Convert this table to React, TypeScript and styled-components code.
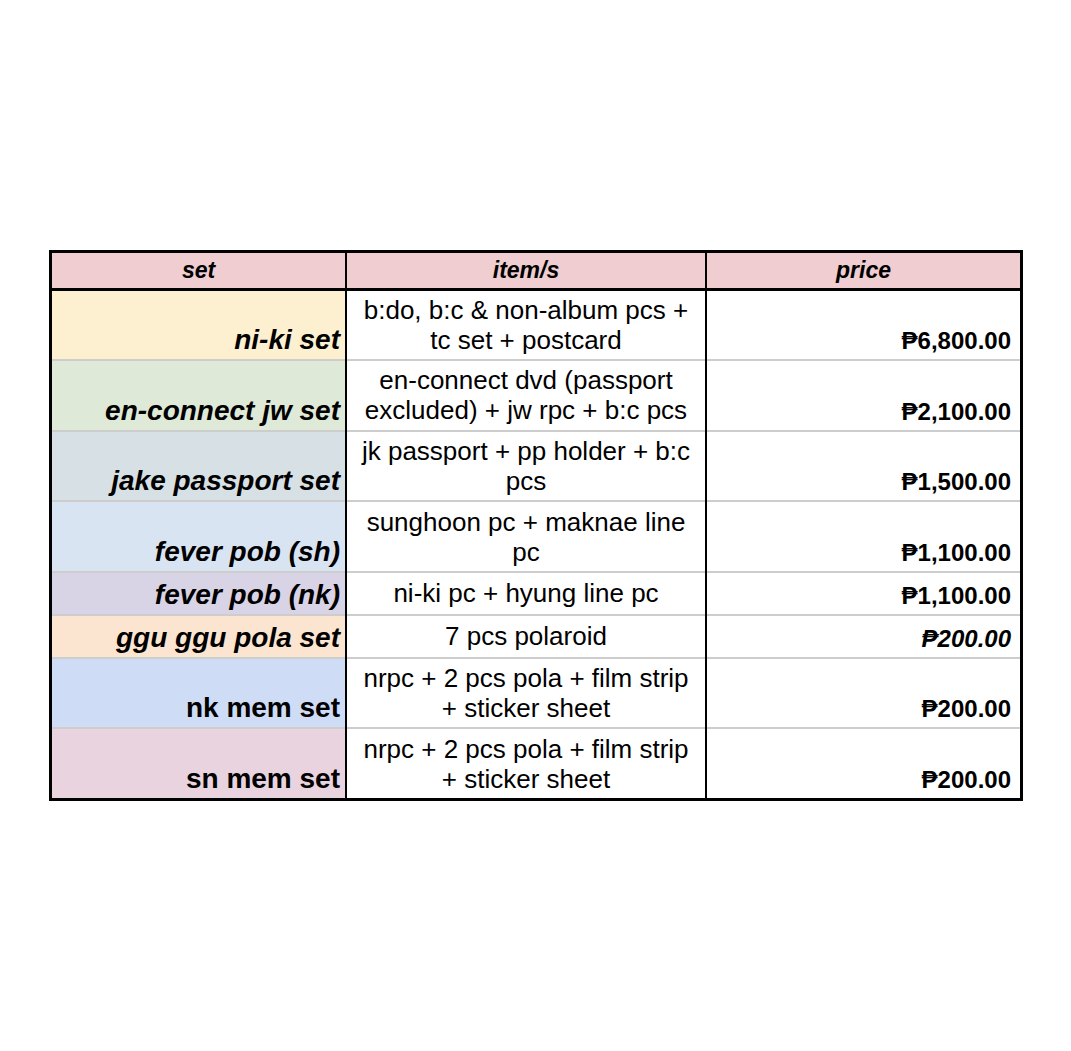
import styled, { createGlobalStyle } from "styled-components";

type Row = {
  set: string;
  items: string[];
  price: string;
  color: string;
  tall: boolean;
  upright?: boolean;
  italicPrice?: boolean;
};

const rows: Row[] = [
  { set: "ni-ki set", items: ["b:do, b:c & non-album pcs +", "tc set + postcard"], price: "₱6,800.00", color: "#fcf0d0", tall: true },
  { set: "en-connect jw set", items: ["en-connect dvd (passport", "excluded) + jw rpc + b:c pcs"], price: "₱2,100.00", color: "#dfe9d7", tall: true },
  { set: "jake passport set", items: ["jk passport + pp holder + b:c", "pcs"], price: "₱1,500.00", color: "#d7e0e4", tall: true },
  { set: "fever pob (sh)", items: ["sunghoon pc + maknae line", "pc"], price: "₱1,100.00", color: "#d9e4f3", tall: true },
  { set: "fever pob (nk)", items: ["ni-ki pc + hyung line pc"], price: "₱1,100.00", color: "#d9d3e6", tall: false },
  { set: "ggu ggu pola set", items: ["7 pcs polaroid"], price: "₱200.00", color: "#fbe5d0", tall: false, italicPrice: true },
  { set: "nk mem set", items: ["nrpc + 2 pcs pola + film strip", "+ sticker sheet"], price: "₱200.00", color: "#cfdcf5", tall: true, upright: true },
  { set: "sn mem set", items: ["nrpc + 2 pcs pola + film strip", "+ sticker sheet"], price: "₱200.00", color: "#e8d3de", tall: true, upright: true },
];

const GlobalStyle = createGlobalStyle`
  html, body {
    margin: 0;
    background: #ffffff;
  }
  body {
    font-family: "Liberation Sans", Arial, "DejaVu Sans", sans-serif;
    color: #000;
  }
`;

const Page = styled.div`
  width: 1071px;
  height: 1051px;
  padding: 250px 0 0 49px;
  box-sizing: border-box;
`;

const Sheet = styled.table`
  width: 964px;
  border-collapse: collapse;
  table-layout: fixed;
  border: 3px solid #000;
`;

const HeadCell = styled.th<{ $w: number }>`
  width: ${(p) => p.$w}px;
  height: 35px;
  padding: 0;
  background: #efcdd0;
  border-bottom: 3px solid #000;
  border-left: 2px solid #000;
  font-size: 23px;
  font-weight: bold;
  font-style: italic;
  text-align: center;
  vertical-align: middle;

  &:first-child {
    border-left: none;
  }
`;

const BodyRow = styled.tr<{ $tall: boolean }>`
  height: ${(p) => (p.$tall ? 70.6 : 43)}px;
  border-bottom: 2px solid #cdcdcd;

  &:last-child {
    border-bottom: none;
  }
`;

const SetCell = styled.td<{ $bg: string; $upright?: boolean }>`
  background: ${(p) => p.$bg};
  padding: 0 5px 4px 0;
  text-align: right;
  vertical-align: bottom;
  font-size: 28px;
  line-height: 30px;
  font-weight: bold;
  font-style: ${(p) => (p.$upright ? "normal" : "italic")};
  white-space: nowrap;
`;

const ItemCell = styled.td`
  border-left: 2px solid #000;
  padding: 0 4px;
  text-align: center;
  vertical-align: middle;
  font-size: 26px;
  line-height: 30px;
`;

const PriceCell = styled.td<{ $italic?: boolean }>`
  border-left: 2px solid #000;
  padding: 0 9px 3px 0;
  text-align: right;
  vertical-align: bottom;
  font-size: 24px;
  line-height: 30px;
  font-weight: bold;
  font-style: ${(p) => (p.$italic ? "italic" : "normal")};
  white-space: nowrap;
`;

const Line = styled.div`
  white-space: nowrap;
`;

export default function App() {
  return (
    <Page>
      <GlobalStyle />
      <Sheet>
        <thead>
          <tr>
            <HeadCell $w={293}>set</HeadCell>
            <HeadCell $w={358}>item/s</HeadCell>
            <HeadCell $w={313}>price</HeadCell>
          </tr>
        </thead>
        <tbody>
          {rows.map((r) => (
            <BodyRow key={r.set} $tall={r.tall}>
              <SetCell $bg={r.color} $upright={r.upright}>
                {r.set}
              </SetCell>
              <ItemCell>
                {r.items.map((line) => (
                  <Line key={line}>{line}</Line>
                ))}
              </ItemCell>
              <PriceCell $italic={r.italicPrice}>{r.price}</PriceCell>
            </BodyRow>
          ))}
        </tbody>
      </Sheet>
    </Page>
  );
}
